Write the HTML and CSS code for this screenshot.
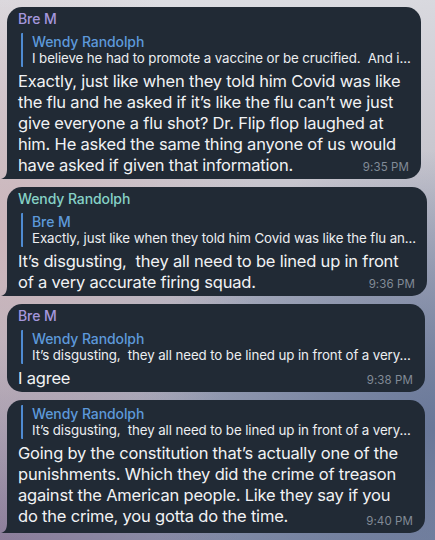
FILE: index.html
```html
<!DOCTYPE html>
<html lang="en">
<head>
<meta charset="utf-8">
<title>Chat</title>
<link rel="stylesheet" href="styles.css">
</head>
<body>
<div class="chat">
  <div class="bubble b1 tail">
    <div class="name name-bre">Bre M</div>
    <div class="quote">
      <div class="q-name">Wendy Randolph</div>
      <div class="q-text">I believe he had to promote a vaccine or be crucified.&nbsp; And i...</div>
    </div>
    <div class="body">Exactly, just like when they told him Covid was like the flu and he asked if it’s like the flu can’t we just give everyone a flu shot? Dr. Flip flop laughed at him. He asked the same thing anyone of us would have asked if given that information.</div>
    <span class="time">9:35 PM</span>
  </div>

  <div class="bubble b2 tail">
    <div class="name name-wendy">Wendy Randolph</div>
    <div class="quote">
      <div class="q-name">Bre M</div>
      <div class="q-text">Exactly, just like when they told him Covid was like the flu an...</div>
    </div>
    <div class="body">It’s disgusting,&nbsp; they all need to be lined up in front of a very accurate firing squad.</div>
    <span class="time">9:36 PM</span>
  </div>

  <div class="bubble b3">
    <div class="name name-bre">Bre M</div>
    <div class="quote">
      <div class="q-name">Wendy Randolph</div>
      <div class="q-text">It’s disgusting,&nbsp; they all need to be lined up in front of a very...</div>
    </div>
    <div class="body">I agree</div>
    <span class="time">9:38 PM</span>
  </div>

  <div class="bubble b4 tail">
    <div class="quote">
      <div class="q-name">Wendy Randolph</div>
      <div class="q-text">It’s disgusting,&nbsp; they all need to be lined up in front of a very...</div>
    </div>
    <div class="body">Going by the constitution that’s actually one of the punishments. Which they did the crime of treason against the American people. Like they say if you do the crime, you gotta do the time.</div>
    <span class="time">9:40 PM</span>
  </div>
</div>
</body>
</html>
```
FILE: styles.css
```css
html, body {
  margin: 0;
  padding: 0;
}
body {
  width: 435px;
  height: 540px;
  overflow: hidden;
  font-family: "Inter", "Liberation Sans", sans-serif;
  background:
    radial-gradient(ellipse 260px 300px at 0px 240px, rgba(205,180,185,0.9), rgba(205,180,185,0) 100%),
    radial-gradient(ellipse 240px 200px at 0px 540px, rgba(140,120,150,0.8), rgba(140,120,150,0) 100%),
    radial-gradient(ellipse 300px 280px at 435px 430px, rgba(100,116,150,0.9), rgba(100,116,150,0) 100%),
    linear-gradient(172deg, #dfe0e5 0%, #c9c7cf 35%, #a4a8ba 65%, #7f8aa6 100%);
}
.chat {
  display: flex;
  flex-direction: column;
  gap: 8px;
  padding: 7px 0 0 7px;
}
.bubble {
  position: relative;
  background: #212a35;
  border-radius: 15px;
  padding: 4px 13px 3px 11px;
  color: #f1f2f4;
  box-sizing: border-box;
}
.b1 { width: 414px; }
.b2 { width: 420px; }
.b3 { width: 418px; }
.b4 { width: 418px; padding-top: 5px; padding-bottom: 6px; }
.tail { border-bottom-left-radius: 4px; }
.tail::before {
  content: "";
  position: absolute;
  left: -6px;
  bottom: 0;
  width: 12px;
  height: 14px;
  background: #212a35;
  clip-path: path("M0 14 C4 13 6 10 6 4 L6 0 L12 0 L12 14 Z");
}
.name {
  font-size: 14px;
  line-height: 16px;
  font-weight: 500;
  margin-bottom: 6px;
  letter-spacing: -0.1px;
}
.name-bre { color: #a597dd; }
.name-wendy { color: #86d1c6; }
.quote {
  margin: 0 0 4px 3px;
  border-left: 2px solid #4f8bd2;
  padding-left: 9px;
  border-radius: 1px;
}
.q-name {
  font-size: 14px;
  line-height: 17px;
  font-weight: 500;
  color: #5d99da;
  letter-spacing: -0.1px;
}
.q-text {
  font-size: 13.3px;
  line-height: 17px;
  color: #eceef1;
  white-space: nowrap;
  letter-spacing: -0.1px;
}
.body {
  font-size: 16.5px;
  line-height: 21px;
  letter-spacing: -0.2px;
}
.time {
  position: absolute;
  right: 12px;
  bottom: 5px;
  font-size: 11.5px;
  line-height: 13px;
  letter-spacing: 0.1px;
  color: #828b97;
}
```
